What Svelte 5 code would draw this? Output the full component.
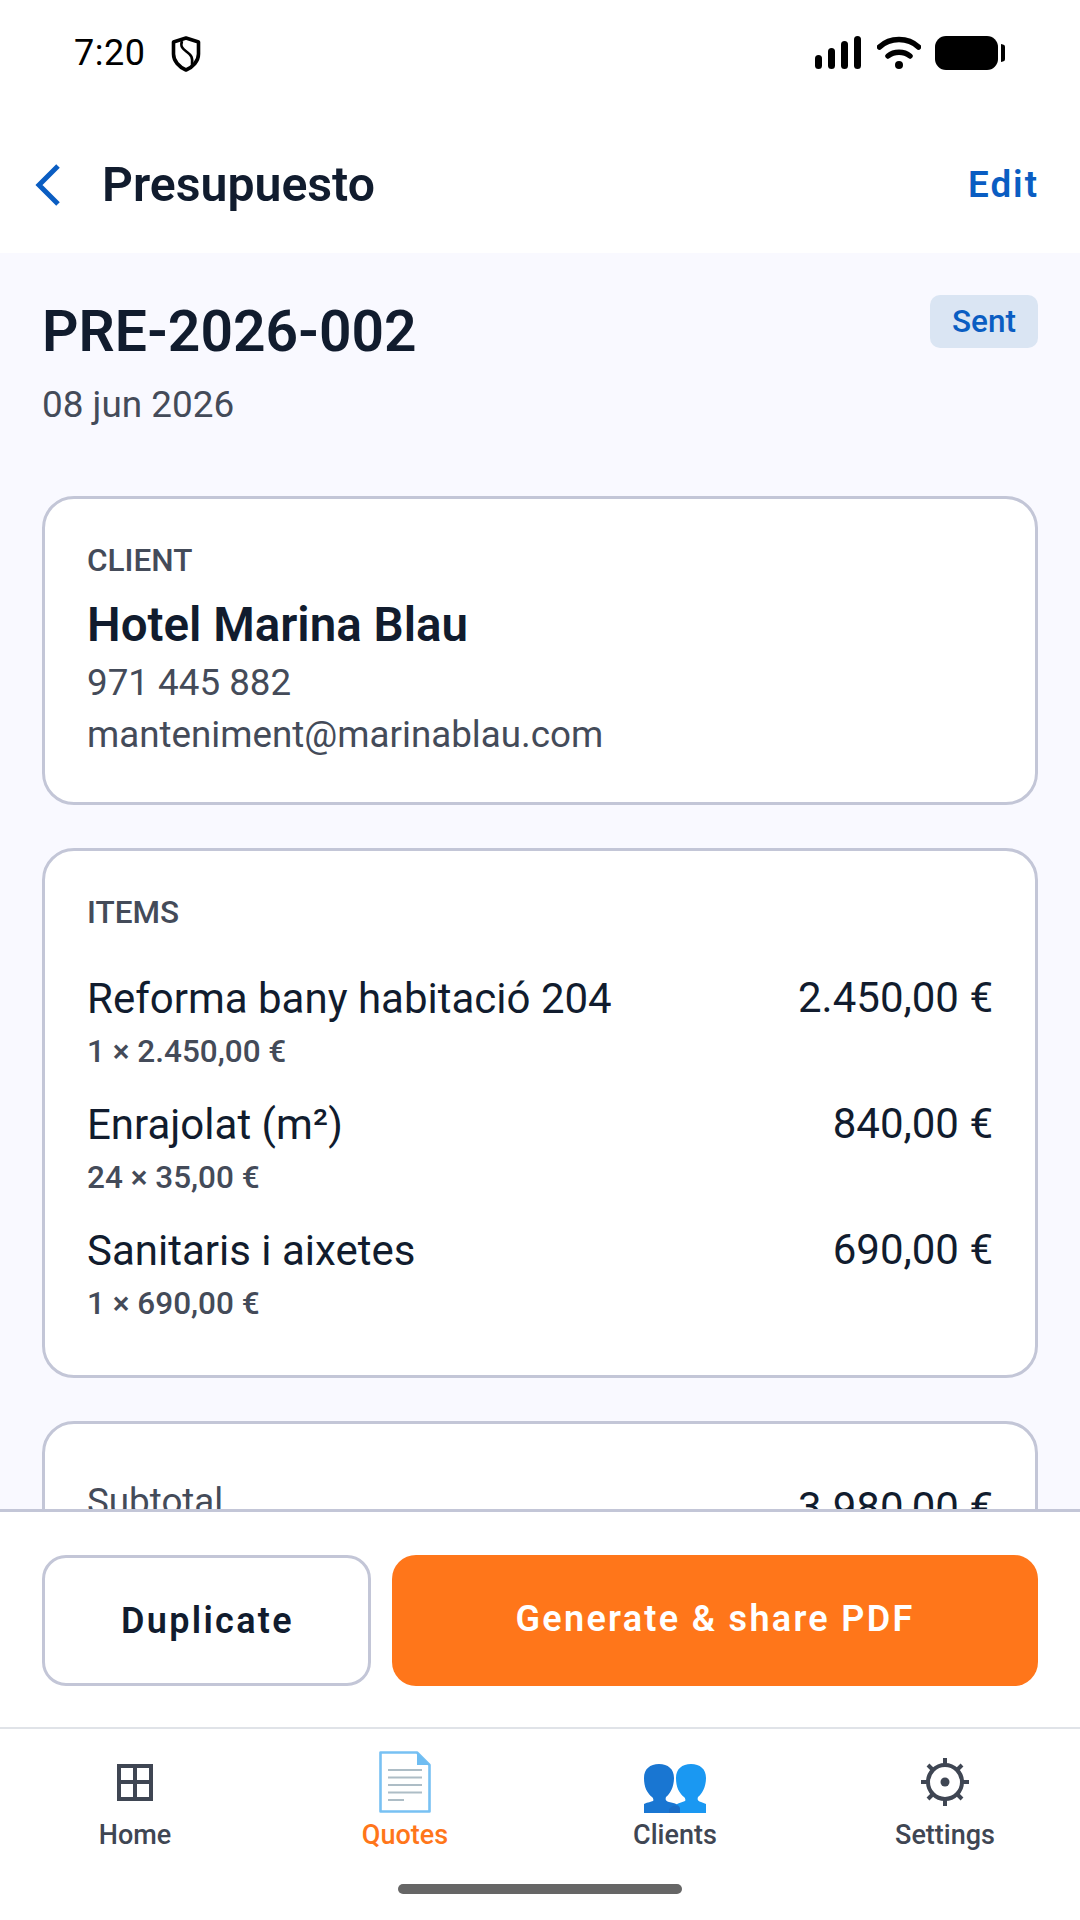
<script lang="ts">
  const items = [
    { name: 'Reforma bany habitació 204', detail: '1 × 2.450,00 €', total: '2.450,00 €' },
    { name: 'Enrajolat (m²)', detail: '24 × 35,00 €', total: '840,00 €' },
    { name: 'Sanitaris i aixetes', detail: '1 × 690,00 €', total: '690,00 €' }
  ];
</script>

<div class="screen">
  <div class="status">
    <div class="status-left">
      <span class="time">7:20</span>
      <svg class="shield" width="30" height="36" viewBox="0 0 30 36" fill="none" stroke="#000" stroke-width="3.6">
        <path d="M15 2 L27.5 6 V18 C27.5 25 22 31 15 34 C8 31 2.500 25 2.500 18 V6 Z" stroke-linejoin="round" />
        <path d="M11 5 C9 11 12 13 16 16 C20 19 22 21 21 29" stroke-width="2.600" />
      </svg>
    </div>
    <div class="status-right">
      <svg width="46" height="34" viewBox="0 0 46 34" fill="#000">
        <rect x="0" y="19" width="7" height="14" rx="3.500" />
        <rect x="13" y="12" width="7" height="21" rx="3.500" />
        <rect x="26" y="5" width="7" height="28" rx="3.500" />
        <rect x="39" y="0" width="7" height="33" rx="3.500" />
      </svg>
      <svg width="44" height="34" viewBox="0 0 44 34" fill="none" stroke="#000" stroke-width="5.500" stroke-linecap="round">
        <path d="M2.500 11 C13 1 31 1 41.500 11" />
        <path d="M11 20 C17 15 27 15 33 20" />
        <circle cx="22" cy="29" r="4" fill="#000" stroke="none" />
      </svg>
      <svg class="battery" width="72" height="36" viewBox="0 0 72 36" fill="#000">
        <rect x="0" y="1" width="63" height="34" rx="11" />
        <path d="M66 9 C69 9.500 70 10 70 12 V24 C70 26 69 26.500 66 27 Z" />
      </svg>
    </div>
  </div>

  <header class="topbar">
    <div class="topbar-left">
      <svg class="back" width="26" height="42" viewBox="0 0 26 42" fill="none" stroke="#0a5dc2" stroke-width="5">
        <path d="M23 2 L4 21 L23 40" />
      </svg>
      <span class="page-title">Presupuesto</span>
    </div>
    <span class="edit">Edit</span>
  </header>

  <main class="scroll">
    <div class="quote-head">
      <div>
        <h1>PRE-2026-002</h1>
        <div class="date">08 jun 2026</div>
      </div>
      <span class="badge">Sent</span>
    </div>

    <section class="card client">
      <div class="label">CLIENT</div>
      <div class="client-name">Hotel Marina Blau</div>
      <div class="muted">971 445 882</div>
      <div class="muted">manteniment@marinablau.com</div>
    </section>

    <section class="card items">
      <div class="label">ITEMS</div>
      {#each items as item}
        <div class="item">
          <div>
            <div class="item-name">{item.name}</div>
            <div class="item-detail">{item.detail}</div>
          </div>
          <div class="item-total">{item.total}</div>
        </div>
      {/each}
    </section>

    <section class="card totals">
      <div class="total-row">
        <span class="muted">Subtotal</span>
        <span class="item-total subtotal">3.980,00 €</span>
      </div>
    </section>
  </main>

  <div class="actions">
    <button class="btn secondary">Duplicate</button>
    <button class="btn primary">Generate &amp; share PDF</button>
  </div>

  <nav class="tabs">
    <div class="tab">
      <div class="tab-icon">
        <svg width="36" height="37" viewBox="0 0 36 37" fill="none" stroke="#3f4653" stroke-width="4">
          <rect x="2" y="2" width="32" height="33" />
          <path d="M18 2 V35 M2 18 H34" />
        </svg>
      </div>
      <span>Home</span>
    </div>
    <div class="tab active">
      <div class="tab-icon">
        <svg width="52" height="62" viewBox="0 0 52 62">
          <path d="M1.500 1.500 H38 L50.500 14 V60.500 H1.500 Z" fill="#fff" stroke="#78c1f3" stroke-width="2.600" stroke-linejoin="round" />
          <path d="M38 1 L51 14 H38 Z" fill="#6fbdf2" />
          <path d="M9 19 H43 M9 26.500 H43 M9 34 H43 M9 41.500 H43 M9 49 H25" stroke="#adbdc6" stroke-width="2" />
        </svg>
      </div>
      <span>Quotes</span>
    </div>
    <div class="tab">
      <div class="tab-icon bottom">
        <svg width="62" height="50" viewBox="0 0 62 50">
          <path d="M25 50 V46 C29 42 36 40 41 38 C42 37 41 35 40 34 C35 30 32 24 32 15 C32 6 38 1 47 1 C56 1 62 6 62 15 C62 24 58 31 54 34 C53 37 54 38 57 39 L62 41 V50 Z" fill="#1a98f2" />
          <path d="M15 1 C24 1 30 6 30 15 C30 24 26 31 22 34 C21 37 22 38 25 39 C31 40 36 42 36 46 V50 H0 V41 C4 39 7 39 9 38 C10 37 9 35 8 34 C3 30 0 24 0 15 C0 6 6 1 15 1 Z" fill="#1976d2" />
          <path d="M25 50 V46 C26 45 28 43.500 30 42.500 C34 43 36 44 36 46 V50 Z" fill="#1b6dc6" />
        </svg>
      </div>
      <span>Clients</span>
    </div>
    <div class="tab">
      <div class="tab-icon">
        <svg width="48" height="48" viewBox="0 0 48 48" fill="none" stroke="#3f4653" stroke-width="4">
          <circle cx="24" cy="24" r="17" />
          <circle cx="24" cy="24" r="4.500" fill="#3f4653" stroke="none" />
          <path d="M24 0 V7 M24 41 V48 M0 24 H7 M41 24 H48 M7 7 L12 12 M36 36 L41 41 M41 7 L36 12 M12 36 L7 41" />
        </svg>
      </div>
      <span>Settings</span>
    </div>
  </nav>

  <div class="home-bar"><div class="indicator"></div></div>
</div>

<style>
  :global(body) {
    margin: 0;
    background: #fff;
  }

  .screen {
    width: 1080px;
    height: 1920px;
    display: flex;
    flex-direction: column;
    overflow: hidden;
    font-family: Roboto, "Noto Sans", sans-serif;
    color: #111c2e;
    background: #fff;
  }

  .status {
    height: 106px;
    flex: none;
    display: flex;
    justify-content: space-between;
    align-items: center;
    padding: 0 73px 0 74px;
    box-sizing: border-box;
    color: #000;
  }

  .status-left {
    display: flex;
    align-items: center;
    gap: 26px;
  }

  .shield {
    margin-top: 2px;
  }

  .time {
    font-size: 36px;
    letter-spacing: 0.5px;
  }

  .status-right {
    display: flex;
    align-items: center;
    gap: 16px;
  }

  .battery {
    margin-left: -2px;
  }

  .topbar {
    height: 147px;
    flex: none;
    display: flex;
    justify-content: space-between;
    align-items: center;
    padding: 10px 41px 0 35px;
    box-sizing: border-box;
  }

  .topbar-left {
    display: flex;
    align-items: center;
    gap: 41px;
  }

  .page-title {
    font-size: 48.2px;
    font-weight: 600;
  }

  .edit {
    font-size: 36.75px;
    font-weight: 600;
    color: #0a5dc2;
    letter-spacing: 2px;
  }

  .scroll {
    flex: 1;
    min-height: 0;
    overflow: hidden;
    background: #f9f9ff;
    padding: 43px 42px 0;
  }

  .quote-head {
    display: flex;
    justify-content: space-between;
    align-items: flex-start;
    margin-bottom: 67px;
  }

  h1 {
    margin: 1px 0 0;
    font-size: 57px;
    font-weight: 600;
    line-height: 70px;
  }

  .date {
    margin-top: 14px;
    font-size: 36.9px;
    line-height: 48px;
    color: #444b59;
  }

  .badge {
    background: #dae5f3;
    color: #0a5dc2;
    font-size: 31.5px;
    font-weight: 500;
    padding: 8px 22px;
    border-radius: 10px;
    line-height: 37px;
    margin-top: -1px;
  }

  .card {
    background: #fff;
    border: 3px solid #c3c6d7;
    border-radius: 32px;
    box-sizing: border-box;
    padding: 44px 42px;
    margin-bottom: 43px;
  }

  .client {
    height: 309px;
  }

  .label {
    font-size: 31.5px;
    font-weight: 500;
    color: #444b59;
    line-height: 36px;
  }

  .client-name {
    font-size: 47.5px;
    font-weight: 600;
    line-height: 56px;
    margin-top: 18px;
    margin-bottom: 4px;
  }

  .muted {
    font-size: 36.75px;
    line-height: 52px;
    color: #444b59;
  }

  .items {
    height: 530px;
  }

  .items .label {
    margin-bottom: 42px;
  }

  .item {
    display: flex;
    justify-content: space-between;
    margin-top: 29px;
  }

  .item-name,
  .item-total {
    font-size: 42px;
    line-height: 52px;
  }

  .item-total {
    color: #111c2e;
    margin-top: -1px;
  }

  .item-detail {
    font-size: 31.5px;
    font-weight: 500;
    color: #444b59;
    line-height: 36px;
    margin-top: 9px;
  }

  .totals {
    height: 300px;
    padding-top: 52px;
  }

  .total-row {
    display: flex;
    justify-content: space-between;
    align-items: flex-start;
  }

  .subtotal {
    margin-top: 6px;
  }

  .actions {
    flex: none;
    height: 220px;
    box-sizing: border-box;
    display: flex;
    gap: 21px;
    padding: 43px 42px 41px;
    background: #fff;
    border-top: 3px solid #c3c6d7;
    border-bottom: 2px solid #e0e3e8;
  }

  .btn {
    font-family: inherit;
    font-size: 36px;
    font-weight: 600;
    letter-spacing: 2.300px;
    border-radius: 24px;
    box-sizing: border-box;
  }

  .secondary {
    width: 329px;
    background: #fff;
    color: #111c2e;
    border: 3px solid #c3c6d7;
    padding-left: 8px;
  }

  .primary {
    flex: 1;
    background: #ff761a;
    color: #fff;
    border: none;
    padding-bottom: 4px;
  }

  .tabs {
    flex: none;
    height: 122px;
    box-sizing: border-box;
    padding-top: 22px;
    display: grid;
    grid-template-columns: repeat(4, 270px);
    background: #fff;
  }

  .tab {
    display: flex;
    flex-direction: column;
    align-items: center;
    font-size: 27px;
    font-weight: 500;
    color: #3f4653;
    line-height: 32px;
  }

  .tab-icon {
    height: 62px;
    margin-bottom: 6px;
    display: flex;
    align-items: center;
  }

  .tab-icon.bottom {
    align-items: flex-end;
  }

  .tab-icon svg {
    display: block;
  }

  .tab.active {
    color: #ff761a;
  }

  .home-bar {
    flex: none;
    height: 69px;
    display: flex;
    justify-content: center;
    padding-top: 33px;
    box-sizing: border-box;
    background: #fff;
  }

  .indicator {
    width: 284px;
    height: 10px;
    border-radius: 5px;
    background: #666;
  }
</style>
